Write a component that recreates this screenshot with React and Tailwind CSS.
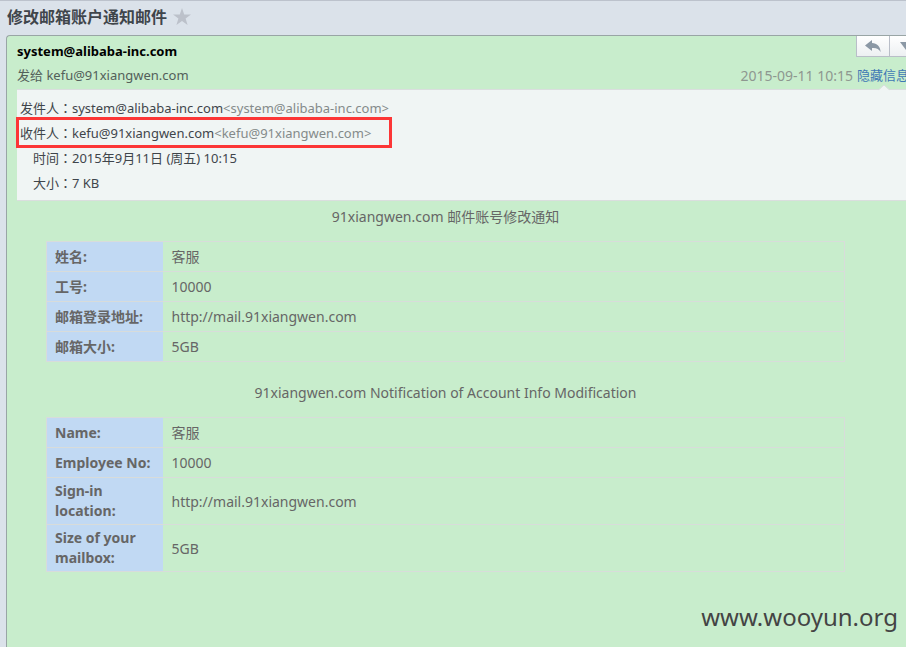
const accountZh = [
  ["姓名:", "客服"],
  ["工号:", "10000"],
  ["邮箱登录地址:", "http://mail.91xiangwen.com"],
  ["邮箱大小:", "5GB"],
];

const accountEn = [
  ["Name:", "客服"],
  ["Employee No:", "10000"],
  ["Sign-in location:", "http://mail.91xiangwen.com"],
  ["Size of your mailbox:", "5GB"],
];

function AccountTable({ rows, label }) {
  return (
    <table
      aria-label={label}
      className="w-full table-fixed border-collapse border border-[#d8dcda] text-left text-sm leading-5 text-[#666]"
    >
      <colgroup>
        <col className="w-[116px]" />
        <col />
      </colgroup>
      <tbody>
        {rows.map(([name, value]) => (
          <tr key={name} className="border-b border-[#d8dcda]">
            <th scope="row" className="bg-[#c1d9f3] py-[3px] pr-1 pl-2 align-middle font-bold">
              {name}
            </th>
            <td className="pt-[5px] pb-1 pl-[9px] align-middle">{value}</td>
          </tr>
        ))}
      </tbody>
    </table>
  );
}

function Detail({ label, children, highlighted }) {
  return (
    <div className="relative flex h-[25px] items-center">
      <dt className="w-[55px] shrink-0 text-right">
        {label}
        <span className="font-['Noto_Sans_CJK_TC',sans-serif]">：</span>
      </dt>
      <dd>{children}</dd>
      {highlighted && (
        <span className="absolute -top-1 -left-px h-[31px] w-[376px] border-3 border-[#fc3636]" />
      )}
    </div>
  );
}

export default function App() {
  return (
    <div className="relative min-h-screen overflow-hidden border-t border-[#bcc2cc] bg-[#dbe2ea] font-['Noto_Sans','Noto_Sans_CJK_SC',sans-serif] text-[13px] text-[#3f454b]">
      <header className="flex h-[34px] items-center gap-1.5 pb-0.5 pl-[7px]">
        <h1 className="text-base font-bold">修改邮箱账户通知邮件</h1>
        <button aria-label="星标邮件" className="text-[#bcc1ca]">
          <svg width="18" height="18" viewBox="0 0 18 18" fill="currentColor">
            <path d="M9 0l2.200 6.400H18l-5.400 4.100 2 6.500L9 13.100 3.400 17l2-6.500L0 6.400h6.800z" />
          </svg>
        </button>
      </header>

      <main className="-mr-[30px] ml-1.5 min-h-[612px] rounded-tl-sm border-t border-l border-[#99a5a5] bg-[#c8edcc]">
        <div className="flex h-[28px] justify-between pl-2.5">
          <strong className="pt-1.5 leading-[18px] text-black">system@alibaba-inc.com</strong>
          <div className="mr-3 flex h-[21px] text-[#8b98a5]">
            <button
              aria-label="回复"
              className="flex w-[34px] items-center justify-center border border-t-0 border-[#b9bec8] bg-linear-to-b from-white to-[#edf0f2]"
            >
              <svg width="16" height="12" viewBox="0 0 16 12" fill="currentColor">
                <path d="M7 0L0 5.500 7 11V8c4-.4 7 .8 8.600 4C15.400 6.500 12 3 7 3z" />
              </svg>
            </button>
            <button
              aria-label="更多"
              className="flex w-[34px] items-center border border-t-0 border-l-0 border-[#b9bec8] bg-linear-to-b from-white to-[#edf0f2] pl-2.5"
            >
              <svg width="12" height="8" viewBox="0 0 12 8" fill="currentColor">
                <path d="M0 0h12L6 8z" />
              </svg>
            </button>
          </div>
        </div>

        <div className="flex h-[25px] items-center justify-between pr-[27px] pb-px pl-2.5 text-[#53605a]">
          <p>发给 kefu@91xiangwen.com</p>
          <p className="flex items-center gap-1 text-[#8e9790]">
            <time className="text-sm">2015-09-11 10:15</time>
            <a href="#details" className="text-[#3f78b5]">隐藏信息</a>
          </p>
        </div>

        <dl
          id="details"
          className="relative ml-2.5 border-y border-[#dadede] bg-[#f0f5f4] pt-1.5 pb-1"
        >
          <svg
            className="absolute -top-1.5 right-[46px]"
            width="12"
            height="7"
            viewBox="0 0 12 7"
            fill="#f0f5f4"
          >
            <path d="M0 7l6-6 6 6z" />
            <path d="M0 6l6-5 6 5" fill="none" stroke="#dadede" />
          </svg>
          <Detail label="发件人">
            system@alibaba-inc.com
            <span className="text-[#848a8a]">&lt;system@alibaba-inc.com&gt;</span>
          </Detail>
          <Detail label="收件人" highlighted>
            kefu@91xiangwen.com
            <span className="text-[#848a8a]">&lt;kefu@91xiangwen.com&gt;</span>
          </Detail>
          <Detail label="时间">2015年9月11日 (周五) 10:15</Detail>
          <Detail label="大小">7 KB</Detail>
        </dl>

        <article className="mr-[91px] ml-[39px] pt-1.5 text-sm text-[#666]">
          <h2 className="mb-3.5 text-center leading-5">91xiangwen.com 邮件账号修改通知</h2>
          <AccountTable rows={accountZh} label="邮件账号修改通知" />
          <h2 className="mt-[21px] mb-3.5 text-center leading-5">
            91xiangwen.com Notification of Account Info Modification
          </h2>
          <AccountTable rows={accountEn} label="Notification of Account Info Modification" />
        </article>
      </main>

      <span className="absolute right-2 bottom-3.5 text-2xl leading-8 text-[#444]">www.wooyun.org</span>
    </div>
  );
}
